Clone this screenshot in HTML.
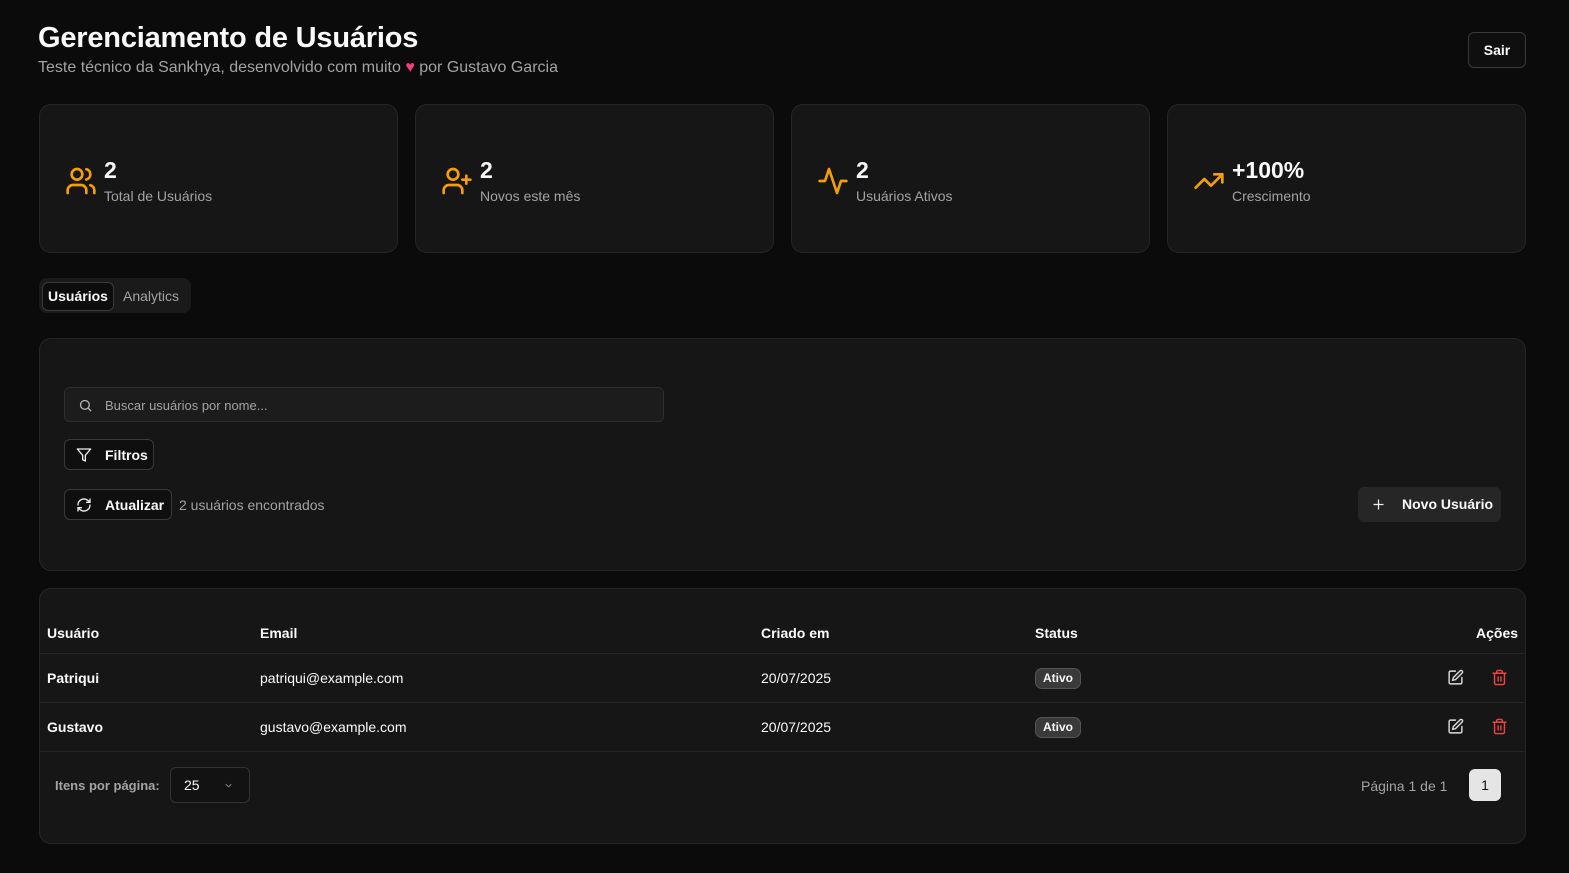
<!DOCTYPE html>
<html><head><meta charset="utf-8"><style>
*{box-sizing:border-box;margin:0;padding:0}
body{width:1569px;height:873px;background:#0b0b0b;font-family:"Liberation Sans",sans-serif;color:#fafafa;position:relative;overflow:hidden}
.abs{position:absolute}
.card{position:absolute;top:104px;width:359px;height:149px;background:#161616;border:1px solid #262626;border-radius:12px}
.card svg{position:absolute;left:25px;top:60px}
.card .n{position:absolute;left:64px;top:52px;font-size:23px;font-weight:bold}
.card .l{position:absolute;left:64px;top:83px;font-size:14px;color:#a3a3a3}
.btn{position:absolute;border:1px solid #3a3a3a;border-radius:6px;background:#0f0f0f;font-size:14px;font-weight:bold;display:flex;align-items:center}
.row{position:absolute;left:40px;width:1484px;height:49px;border-top:1px solid #262626;font-size:14px}
.row span{position:absolute;top:16px}
.badge{position:absolute;left:995px;top:14px;height:21px;width:46px;border:1px solid #555;background:#3a3a3a;border-radius:7px;font-size:12px;font-weight:bold;text-align:center;line-height:19px}
</style></head><body>
<div class="abs" style="left:38px;top:22px;font-size:29px;font-weight:bold;letter-spacing:-0.2px">Gerenciamento de Usuários</div>
<div class="abs" style="left:38px;top:59px;font-size:16px;color:#a3a3a3">Teste técnico da Sankhya, desenvolvido com muito <span style="color:#f0407a">♥</span> por Gustavo Garcia</div>
<div class="btn" style="left:1468px;top:32px;width:58px;height:36px;justify-content:center">Sair</div>

<div class="card" style="left:39px"><svg width="32" height="32" viewBox="0 0 24 24" fill="none" stroke="#f59e0b" stroke-width="2" stroke-linecap="round"><path d="M16 21v-2a4 4 0 0 0-4-4H6a4 4 0 0 0-4 4v2"/><circle cx="9" cy="7" r="4"/><path d="M22 21v-2a4 4 0 0 0-3-3.87M16 3.13a4 4 0 0 1 0 7.75"/></svg><div class="n">2</div><div class="l">Total de Usuários</div></div>
<div class="card" style="left:415px"><svg width="32" height="32" viewBox="0 0 24 24" fill="none" stroke="#f59e0b" stroke-width="2" stroke-linecap="round"><path d="M16 21v-2a4 4 0 0 0-4-4H6a4 4 0 0 0-4 4v2"/><circle cx="9" cy="7" r="4"/><path d="M19 8v6M22 11h-6"/></svg><div class="n">2</div><div class="l">Novos este mês</div></div>
<div class="card" style="left:791px"><svg width="32" height="32" viewBox="0 0 24 24" fill="none" stroke="#f59e0b" stroke-width="2" stroke-linecap="round" stroke-linejoin="round"><path d="M22 12h-4l-3 9L9 3l-3 9H2"/></svg><div class="n">2</div><div class="l">Usuários Ativos</div></div>
<div class="card" style="left:1167px"><svg width="32" height="32" viewBox="0 0 24 24" fill="none" stroke="#f59e0b" stroke-width="2" stroke-linecap="round" stroke-linejoin="round"><path d="M22 7l-8.5 8.5-5-5L2 17"/><path d="M16 7h6v6"/></svg><div class="n">+100%</div><div class="l">Crescimento</div></div>

<div class="abs" style="left:39px;top:278px;width:152px;height:35px;background:#1a1a1a;border-radius:8px"></div>
<div class="abs" style="left:42px;top:282px;width:72px;height:29px;background:#0d0d0d;border:1px solid #3a3a3a;border-radius:6px;font-size:14px;font-weight:bold;text-align:center;line-height:27px">Usuários</div>
<div class="abs" style="left:123px;top:288px;font-size:14px;color:#a3a3a3">Analytics</div>

<div class="abs" style="left:39px;top:338px;width:1487px;height:233px;background:#161616;border:1px solid #262626;border-radius:12px"></div>
<div class="abs" style="left:64px;top:387px;width:600px;height:35px;background:#1c1c1c;border:1px solid #2e2e2e;border-radius:6px;font-size:13px;color:#a3a3a3;line-height:35px;padding-left:40px">Buscar usuários por nome...
<svg class="abs" style="left:13px;top:10px" width="15" height="15" viewBox="0 0 24 24" fill="none" stroke="#bbb" stroke-width="2"><circle cx="11" cy="11" r="7"/><path d="M21 21l-5-5"/></svg></div>
<div class="btn" style="left:64px;top:439px;width:90px;height:31px;padding-left:40px">Filtros<svg class="abs" style="left:11px;top:7px" width="16" height="16" viewBox="0 0 24 24" fill="none" stroke="#eee" stroke-width="2" stroke-linejoin="round"><path d="M22 3H2l8 9.46V19l4 2v-8.54L22 3z"/></svg></div>
<div class="btn" style="left:64px;top:489px;width:108px;height:31px;padding-left:40px">Atualizar<svg class="abs" style="left:11px;top:7px" width="16" height="16" viewBox="0 0 24 24" fill="none" stroke="#eee" stroke-width="2" stroke-linecap="round"><path d="M3 12a9 9 0 0 1 15-6.7L21 8M21 3v5h-5M21 12a9 9 0 0 1-15 6.7L3 16M8 16H3v5"/></svg></div>
<div class="abs" style="left:179px;top:497px;font-size:14px;color:#a3a3a3">2 usuários encontrados</div>
<div class="abs" style="left:1358px;top:487px;width:143px;height:35px;background:#262626;border-radius:6px;font-size:14px;font-weight:bold;line-height:35px;padding-left:44px">Novo Usuário<svg class="abs" style="left:13px;top:10px" width="15" height="15" viewBox="0 0 24 24" fill="none" stroke="#eee" stroke-width="2"><path d="M12 4v16M4 12h16"/></svg></div>

<div class="abs" style="left:39px;top:588px;width:1487px;height:256px;background:#161616;border:1px solid #262626;border-radius:12px"></div>
<div class="abs" style="left:47px;top:625px;font-size:14px;font-weight:bold">Usuário</div>
<div class="abs" style="left:260px;top:625px;font-size:14px;font-weight:bold">Email</div>
<div class="abs" style="left:761px;top:625px;font-size:14px;font-weight:bold">Criado em</div>
<div class="abs" style="left:1035px;top:625px;font-size:14px;font-weight:bold">Status</div>
<div class="abs" style="left:1476px;top:625px;font-size:14px;font-weight:bold">Ações</div>
<div class="row" style="top:653px"><span style="left:7px;font-weight:bold">Patriqui</span><span style="left:220px">patriqui@example.com</span><span style="left:721px">20/07/2025</span><div class="badge">Ativo</div>
<svg class="abs" style="left:1407px;top:15px" width="17" height="17" viewBox="0 0 24 24" fill="none" stroke="#ddd" stroke-width="2" stroke-linecap="round"><path d="M12 3H5a2 2 0 0 0-2 2v14a2 2 0 0 0 2 2h14a2 2 0 0 0 2-2v-7"/><path d="M18.4 2.6a2 2 0 0 1 3 3L12 15l-4 1 1-4z"/></svg>
<svg class="abs" style="left:1451px;top:15px" width="17" height="17" viewBox="0 0 24 24" fill="none" stroke="#ef4444" stroke-width="2" stroke-linecap="round"><path d="M3 6h18M19 6v14a2 2 0 0 1-2 2H7a2 2 0 0 1-2-2V6M8 6V4a2 2 0 0 1 2-2h4a2 2 0 0 1 2 2v2M10 11v6M14 11v6"/></svg></div>
<div class="row" style="top:702px"><span style="left:7px;font-weight:bold">Gustavo</span><span style="left:220px">gustavo@example.com</span><span style="left:721px">20/07/2025</span><div class="badge">Ativo</div>
<svg class="abs" style="left:1407px;top:15px" width="17" height="17" viewBox="0 0 24 24" fill="none" stroke="#ddd" stroke-width="2" stroke-linecap="round"><path d="M12 3H5a2 2 0 0 0-2 2v14a2 2 0 0 0 2 2h14a2 2 0 0 0 2-2v-7"/><path d="M18.4 2.6a2 2 0 0 1 3 3L12 15l-4 1 1-4z"/></svg>
<svg class="abs" style="left:1451px;top:15px" width="17" height="17" viewBox="0 0 24 24" fill="none" stroke="#ef4444" stroke-width="2" stroke-linecap="round"><path d="M3 6h18M19 6v14a2 2 0 0 1-2 2H7a2 2 0 0 1-2-2V6M8 6V4a2 2 0 0 1 2-2h4a2 2 0 0 1 2 2v2M10 11v6M14 11v6"/></svg></div>
<div class="abs" style="left:40px;top:751px;width:1484px;border-top:1px solid #262626"></div>
<div class="abs" style="left:55px;top:778px;font-size:13px;color:#a3a3a3;font-weight:bold">Itens por página:</div>
<div class="abs" style="left:170px;top:767px;width:80px;height:36px;border:1px solid #333;border-radius:6px;background:#121212;font-size:14px;line-height:34px;padding-left:13px">25<svg class="abs" style="left:52px;top:12px" width="11" height="11" viewBox="0 0 24 24" fill="none" stroke="#888" stroke-width="2"><path d="M6 9l6 6 6-6"/></svg></div>
<div class="abs" style="left:1361px;top:778px;font-size:14px;color:#a3a3a3">Página 1 de 1</div>
<div class="abs" style="left:1469px;top:769px;width:32px;height:32px;background:#e5e5e5;border-radius:6px;color:#111;font-size:14px;text-align:center;line-height:32px">1</div>
</body></html>
